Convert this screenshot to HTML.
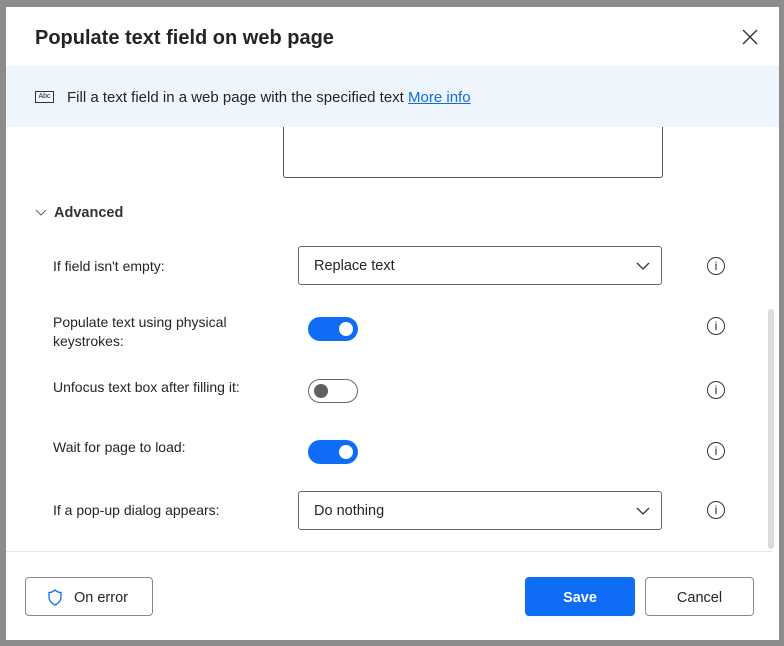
<!DOCTYPE html>
<html><head><style>
body{margin:0;width:784px;height:646px;background:#8c8c8c;font-family:"Liberation Sans",sans-serif;position:relative;overflow:hidden;color:#242424}
.dlg{position:absolute;left:6px;top:7px;width:773px;height:633px;background:#fff}
.a{position:absolute}
.lbl{position:absolute;left:53px;font-size:14px;line-height:19px;color:#242424}
.dd{position:absolute;left:298px;width:364px;height:39px;border:1px solid #666;border-radius:3px;box-sizing:border-box;font-size:14.5px;line-height:39px;padding-left:15px}
.info{position:absolute;left:707px;width:18px;height:18px;border:1.3px solid #333;border-radius:50%;box-sizing:border-box;font:12px "Liberation Sans",sans-serif;text-align:center;line-height:16px}
.tg{position:absolute;left:308px;width:50px;height:24px;border-radius:12px;box-sizing:border-box}
.on{background:#0f6cf5}
.on::after{content:"";position:absolute;right:5px;top:5px;width:14px;height:14px;border-radius:50%;background:#fff}
.off{border:1px solid #666;background:#fff}
.off::after{content:"";position:absolute;left:5px;top:4px;width:14px;height:14px;border-radius:50%;background:#616161}
.btn{position:absolute;top:577px;height:39px;border:1px solid #888;border-radius:4px;box-sizing:border-box;font-size:14.5px;line-height:40px;text-align:center;background:#fff}
</style></head><body>
<div class="dlg"></div>
<div class="a" style="left:35px;top:27px;font-size:20px;font-weight:bold;color:#242424">Populate text field on web page</div>
<svg class="a" style="left:742px;top:29px" width="16" height="16"><path d="M1 1L15 15M15 1L1 15" stroke="#333" stroke-width="1.4"/></svg>
<div class="a" style="left:6px;top:66px;width:773px;height:61px;background:#eff5fd"></div>
<div class="a" style="left:35px;top:91px;width:19px;height:12px;border:1px solid #333;font-size:7px;line-height:10px;text-align:center;box-sizing:border-box">Abc</div>
<div class="a" style="left:67px;top:89px;font-size:15px">Fill a text field in a web page with the specified text <span style="color:#0f6cd8;text-decoration:underline">More info</span></div>
<div class="a" style="left:283px;top:127px;width:380px;height:51px;border:1px solid #555;border-top:none;border-radius:0 0 3px 3px;box-sizing:border-box"></div>
<svg class="a" style="left:35px;top:209px" width="12" height="8"><path d="M1 1L6 6L11 1" stroke="#666" fill="none"/></svg>
<div class="a" style="left:54px;top:205px;font-size:14.5px;font-weight:bold;color:#333">Advanced</div>
<div class="lbl" style="top:257px">If field isn't empty:</div>
<div class="dd" style="top:246px">Replace text</div>
<svg class="a" style="left:636px;top:262px" width="14" height="8"><path d="M1 1L7 7L13 1" stroke="#333" fill="none" stroke-width="1.3"/></svg>
<div class="info" style="top:257px">i</div>
<div class="lbl" style="top:313px">Populate text using physical<br>keystrokes:</div>
<div class="tg on" style="top:317px"></div>
<div class="info" style="top:317px">i</div>
<div class="lbl" style="top:378px">Unfocus text box after filling it:</div>
<div class="tg off" style="top:379px"></div>
<div class="info" style="top:381px">i</div>
<div class="lbl" style="top:438px">Wait for page to load:</div>
<div class="tg on" style="top:440px"></div>
<div class="info" style="top:442px">i</div>
<div class="lbl" style="top:501px">If a pop-up dialog appears:</div>
<div class="dd" style="top:491px">Do nothing</div>
<svg class="a" style="left:636px;top:507px" width="14" height="8"><path d="M1 1L7 7L13 1" stroke="#333" fill="none" stroke-width="1.3"/></svg>
<div class="info" style="top:501px">i</div>
<div class="a" style="left:768px;top:309px;width:6px;height:240px;background:#dcdcdc;border-radius:3px"></div>
<div class="a" style="left:6px;top:551px;width:767px;height:1px;background:#e6e6e6"></div>
<div class="btn" style="left:25px;width:128px"><svg style="position:absolute;left:22px;top:11px" width="14" height="17"><path d="M7 1C5 3 3 3.5 1 3.5V8C1 12 4 14.5 7 16C10 14.5 13 12 13 8V3.5C11 3.5 9 3 7 1Z" stroke="#0f6cf5" fill="none" stroke-width="1.3"/></svg><span style="margin-left:24px">On error</span></div>
<div class="btn" style="left:525px;width:110px;background:#0f6cf5;border-color:#0f6cf5;color:#fff;font-weight:bold">Save</div>
<div class="btn" style="left:645px;width:109px">Cancel</div>
</body></html>
